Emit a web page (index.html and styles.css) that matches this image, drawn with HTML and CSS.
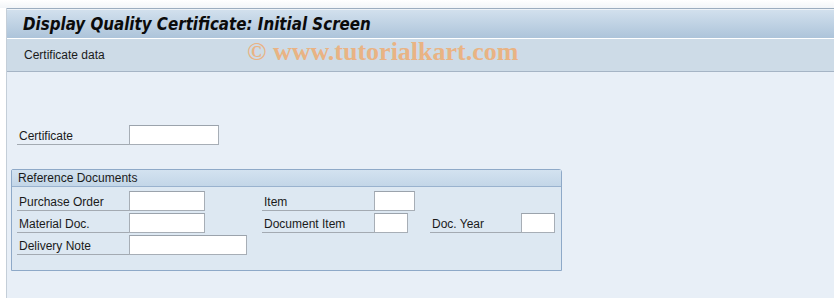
FILE: index.html
```html
<!DOCTYPE html>
<html>
<head>
<meta charset="utf-8">
<link rel="stylesheet" href="styles.css">
</head>
<body>
<div class="top"></div>
<div class="frame">
  <div class="titlebar"><h1 class="title">Display Quality Certificate: Initial Screen</h1></div>
  <div class="toolbar">
    <span class="tool-text">Certificate data</span>
    <span class="watermark">© www.tutorialkart.com</span>
  </div>
  <div class="content">
    <div class="cert-row">
      <label class="lbl lbl-main">Certificate</label>
      <span class="inp w90"></span>
    </div>
    <div class="group">
      <div class="group-head">Reference Documents</div>
      <div class="group-body">
        <label class="lbl c1">Purchase Order</label>
        <span class="inp w76 c2"></span>
        <label class="lbl c3">Item</label>
        <span class="inp w41 c4"></span>

        <label class="lbl c1">Material Doc.</label>
        <span class="inp w76 c2"></span>
        <label class="lbl c3">Document Item</label>
        <span class="inp w34 c4"></span>
        <label class="lbl lbl-short c5">Doc. Year</label>
        <span class="inp w34 c6"></span>

        <label class="lbl c1">Delivery Note</label>
        <span class="inp w118 c2"></span>
      </div>
    </div>
  </div>
</div>
</body>
</html>
```

FILE: styles.css
```css
html, body {
  margin: 0;
  padding: 0;
  background: #ffffff;
  font-family: "Liberation Sans", Arial, sans-serif;
  font-size: 12px;
  color: #1a1a1a;
}
.top {
  height: 8px;
  background: linear-gradient(#ffffff, #f2f5f8);
}
.frame {
  margin-left: 6px;
  border-left: 1px solid #c4ced8;
  height: 290px;
  display: flex;
  flex-direction: column;
}
.titlebar {
  height: 29px;
  border-top: 1px solid #9cadbf;
  border-bottom: 1px solid #ffffff;
  box-shadow: inset 0 1px 0 #eef3f8;
  background: linear-gradient(#d3e1ee, #adc4da);
  display: flex;
  align-items: center;
  padding-left: 16px;
}
.title {
  margin: 0;
  font-family: "DejaVu Sans Condensed", "DejaVu Sans", sans-serif;
  font-weight: bold;
  font-style: italic;
  font-size: 16.8px;
  color: #0b0b0b;
}
.toolbar {
  height: 32px;
  border-bottom: 1px solid #a5b4c5;
  background: #cddbe7;
  display: flex;
  align-items: center;
  padding-left: 17px;
}
.tool-text {
  width: 223px;
}
.watermark {
  font-family: "Liberation Serif", "Times New Roman", serif;
  font-weight: bold;
  font-size: 26px;
  color: #e9b384;
  margin-top: -6px;
}
.content {
  flex: 1;
  background: #e8eff7;
  padding: 53px 0 0 4px;
}
.cert-row {
  display: flex;
  height: 20px;
  margin-left: 6px;
}
.lbl {
  box-sizing: border-box;
  height: 20px;
  line-height: 17px;
  padding: 3px 0 0 2px;
  border-bottom: 1px solid #a3aab2;
  white-space: nowrap;
}
.lbl-main {
  width: 112px;
}
.inp {
  box-sizing: border-box;
  display: block;
  height: 20px;
  background: #ffffff;
  border: 1px solid #a7aeb6;
  border-top-color: #9ba3ac;
}
.w90 { width: 90px; }
.w76 { width: 76px; }
.w41 { width: 41px; }
.w34 { width: 34px; }
.w118 { width: 118px; }
.group {
  margin-top: 24px;
  width: 551px;
  box-sizing: border-box;
  border: 1px solid #8ea9c8;
  border-radius: 2px 3px 0 0;
  background: #dde8f2;
}
.group-head {
  height: 16px;
  line-height: 17px;
  padding-left: 6px;
  background: linear-gradient(#d3e2f0, #c3d6e8);
  border-bottom: 1px solid #99b2ce;
}
.group-body {
  display: grid;
  grid-template-columns: 112px 133px 112px 56px 91px 34px;
  grid-auto-rows: 20px;
  row-gap: 2px;
  padding: 4px 0 15px 5px;
}
.c1 { grid-column: 1; }
.c2 { grid-column: 2; }
.c3 { grid-column: 3; }
.c4 { grid-column: 4; }
.c5 { grid-column: 5; }
.c6 { grid-column: 6; }
```
